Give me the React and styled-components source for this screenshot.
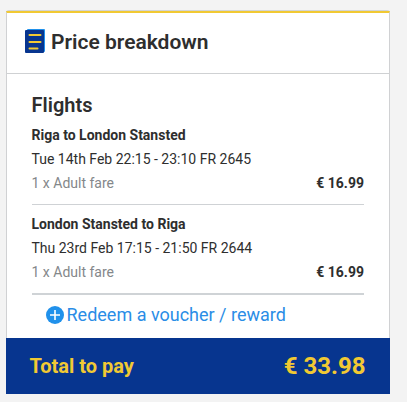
import React from 'react';
import styled, { createGlobalStyle } from 'styled-components';

const GlobalStyle = createGlobalStyle`
  * {
    box-sizing: border-box;
  }
  body {
    margin: 0;
    background-color: #f3f3f3;
    color: #2e2e2e;
    font-family: Roboto, sans-serif;
  }
  h2, h3, h4, p {
    margin: 0;
  }
`;

const Page = styled.main`
  padding: 10px 17px 8px 6px;
`;

const Card = styled.section`
  display: flex;
  flex-direction: column;
  width: 384px;
  height: 384px;
  border-top: 1px solid #d2d4d6;
  border-radius: 3px 3px 0 0;
`;

const CardBody = styled.div`
  flex-grow: 1;
  background-color: #fff;
  border: 1px solid #d0d1d3;
  border-top: 2px solid #f1c933;
  border-bottom: 0;
`;

const Header = styled.header`
  display: flex;
  align-items: center;
  height: 61px;
  padding: 0 0 3px 18px;
  border-bottom: 1px solid #cfd1d3;
`;

const HeaderIcon = styled.svg`
  width: 20px;
  height: 24px;
  margin-bottom: 2px;
`;

const Title = styled.h2`
  margin-left: 6px;
  font-size: 21px;
  font-weight: 600;
  line-height: 24px;
`;

const Content = styled.div`
  padding: 19px 25px 0 24.5px;
`;

const Subtitle = styled.h3`
  font-size: 20px;
  font-weight: 600;
  line-height: 24px;
  margin-bottom: 6px;
`;

const Flight = styled.article`
  height: ${({ last }) => (last ? '72px' : '82px')};
  margin-bottom: ${({ last }) => (last ? '9px' : '7px')};
  border-bottom: ${({ last }) => (last ? '0' : '1px solid #cfd2d5')};
  font-size: 14px;
  line-height: 24px;
`;

const Route = styled.h4`
  font-size: 14px;
  font-weight: 700;
`;

const Fare = styled.div`
  display: flex;
  justify-content: space-between;
  color: #84878a;
`;

const Price = styled.strong`
  color: #2e2e2e;
  font-weight: 700;
`;

const Voucher = styled.div`
  display: flex;
  align-items: center;
  padding: 7px 0 0 14px;
  border-top: 2px solid #cfd3d6;
  color: #2a8de6;
  font-size: 18px;
  line-height: 26px;
`;

const VoucherText = styled.span`
  margin-left: 3px;
`;

const Total = styled.footer`
  display: flex;
  align-items: center;
  justify-content: space-between;
  height: 56px;
  padding: 0 24.5px 0 23.5px;
  background-color: #07358f;
  color: #f1c933;
  font-size: 20px;
  font-weight: 700;
`;

const TotalPrice = styled.span`
  font-size: 24px;
`;

const BreakdownIcon = () => (
  <HeaderIcon viewBox="0 0 20 24">
    <rect x="2" width="18" height="23" rx="1" fill="#2091eb"/>
    <rect y="1" width="19" height="23" rx="1" fill="#07358f"/>
    <path d="M4.5 6h11M4.5 13h11M4.5 19.5h8" stroke="#f1c933" strokeWidth="2" strokeLinecap="round"/>
  </HeaderIcon>
);

const PlusIcon = () => (
  <svg width="18" height="18" viewBox="0 0 18 18">
    <circle cx="9" cy="9" r="9" fill="#2091eb"/>
    <path d="M9 4v10M4 9h10" stroke="#fff" strokeWidth="1.6"/>
  </svg>
);

const flights = [
  { route: 'Riga to London Stansted', details: 'Tue 14th Feb 22:15 - 23:10 FR 2645' },
  { route: 'London Stansted to Riga', details: 'Thu 23rd Feb 17:15 - 21:50 FR 2644' },
];

const App = () => (
  <Page>
    <GlobalStyle/>
    <Card>
      <CardBody>
        <Header>
          <BreakdownIcon/>
          <Title>Price breakdown</Title>
        </Header>
        <Content>
          <Subtitle>Flights</Subtitle>
          {flights.map(({ route, details }, i) => (
            <Flight key={route} last={i === flights.length - 1 ? 1 : undefined}>
              <Route>{route}</Route>
              <p>{details}</p>
              <Fare>
                <span>1 x Adult fare</span>
                <Price>€ 16.99</Price>
              </Fare>
            </Flight>
          ))}
          <Voucher>
            <PlusIcon/>
            <VoucherText>Redeem a voucher / reward</VoucherText>
          </Voucher>
        </Content>
      </CardBody>
      <Total>
        <span>Total to pay</span>
        <TotalPrice>€ 33.98</TotalPrice>
      </Total>
    </Card>
  </Page>
);

export default App;
